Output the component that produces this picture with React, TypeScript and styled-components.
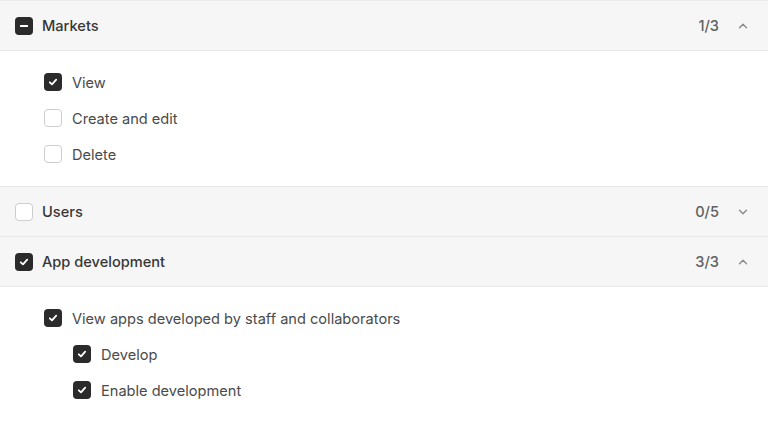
import React from "react";
import styled, { createGlobalStyle } from "styled-components";

const Global = createGlobalStyle`
  html, body { margin: 0; padding: 0; background: #ffffff; }
  body { font-family: Inter, "Noto Sans", sans-serif; -webkit-font-smoothing: antialiased; }
`;

const List = styled.div`
  width: 768px;
  border-top: 1px solid #ebebeb;
`;

const Header = styled.div`
  height: 49px;
  display: flex;
  align-items: center;
  padding: 0 19px 0 15px;
  background: #f6f6f6;
  border-bottom: 1px solid #e8e8e8;
`;

const HeaderLabel = styled.span`
  flex: 1;
  margin-left: 9px;
  font-size: 14.6px;
  font-weight: 550;
  color: #363636;
`;

const Count = styled.span`
  font-size: 14.6px;
  font-weight: 500;
  color: #616161;
  margin-right: 18px;
`;

const Content = styled.div`
  padding: 13px 0 14px;
  border-bottom: 1px solid #e8e8e8;
  background: #fff;
`;

const Row = styled.div<{ $indent: number }>`
  height: 36px;
  display: flex;
  align-items: center;
  padding-left: ${(p) => 44 + p.$indent * 29}px;
`;

const RowLabel = styled.span`
  margin-left: 10px;
  padding-top: 2px;
  font-size: 14.6px;
  font-weight: 400;
  color: #4a4a4a;
`;

const Box = styled.span<{ $on: boolean }>`
  width: 18px;
  height: 18px;
  box-sizing: border-box;
  border-radius: 4px;
  display: inline-flex;
  align-items: center;
  justify-content: center;
  flex-shrink: 0;
  background: ${(p) => (p.$on ? "#2b2b2b" : "#ffffff")};
  border: ${(p) => (p.$on ? "none" : "1.5px solid #cdcdcd")};
`;

type State = "on" | "off" | "mixed";

const Checkbox = ({ state }: { state: State }) => (
  <Box $on={state !== "off"}>
    {state === "on" && (
      <svg width="12" height="12" viewBox="0 0 12 12" fill="none">
        <path d="M2.8 6.3 L5 8.4 L9.2 3.6" stroke="#fff" strokeWidth="1.8" strokeLinecap="round" strokeLinejoin="round" />
      </svg>
    )}
    {state === "mixed" && (
      <svg width="12" height="12" viewBox="0 0 12 12" fill="none">
        <path d="M2.8 6 H9.2" stroke="#fff" strokeWidth="2" strokeLinecap="round" />
      </svg>
    )}
  </Box>
);

const Chevron = ({ up }: { up: boolean }) => (
  <svg width="12" height="12" viewBox="0 0 12 12" fill="none">
    <path
      d={up ? "M2.5 7.8 L6 4.3 L9.5 7.8" : "M2.5 4.3 L6 7.8 L9.5 4.3"}
      stroke="#8a8a8a"
      strokeWidth="1.4"
      strokeLinecap="round"
      strokeLinejoin="round"
    />
  </svg>
);

type Item = { label: string; state: State; indent: number };
type Section = { title: string; state: State; count: string; open: boolean; items: Item[] };

const sections: Section[] = [
  {
    title: "Markets",
    state: "mixed",
    count: "1/3",
    open: true,
    items: [
      { label: "View", state: "on", indent: 0 },
      { label: "Create and edit", state: "off", indent: 0 },
      { label: "Delete", state: "off", indent: 0 },
    ],
  },
  { title: "Users", state: "off", count: "0/5", open: false, items: [] },
  {
    title: "App development",
    state: "on",
    count: "3/3",
    open: true,
    items: [
      { label: "View apps developed by staff and collaborators", state: "on", indent: 0 },
      { label: "Develop", state: "on", indent: 1 },
      { label: "Enable development", state: "on", indent: 1 },
    ],
  },
];

export default function App() {
  return (
    <>
      <Global />
      <List>
        {sections.map((s) => (
          <div key={s.title}>
            <Header>
              <Checkbox state={s.state} />
              <HeaderLabel>{s.title}</HeaderLabel>
              <Count>{s.count}</Count>
              <Chevron up={s.open} />
            </Header>
            {s.open && (
              <Content>
                {s.items.map((it) => (
                  <Row key={it.label} $indent={it.indent}>
                    <Checkbox state={it.state} />
                    <RowLabel>{it.label}</RowLabel>
                  </Row>
                ))}
              </Content>
            )}
          </div>
        ))}
      </List>
    </>
  );
}
